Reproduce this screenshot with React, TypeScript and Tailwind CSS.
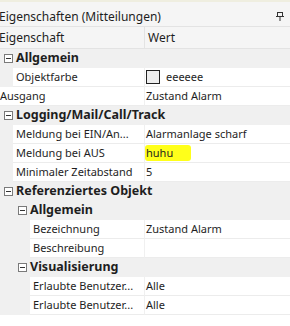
import React from "react";

type Row =
  | { kind: "cat"; level: number; label: string }
  | { kind: "prop"; level: number; label: string; value?: string; swatch?: boolean; mark?: boolean };

// property grid rows, in order
const ROWS: Row[] = [
  { kind: "cat", level: 0, label: "Allgemein" },
  { kind: "prop", level: 1, label: "Objektfarbe", value: "eeeeee", swatch: true },
  { kind: "prop", level: 0, label: "Ausgang", value: "Zustand Alarm" },
  { kind: "cat", level: 0, label: "Logging/Mail/Call/Track" },
  { kind: "prop", level: 1, label: "Meldung bei EIN/An...", value: "Alarmanlage scharf" },
  { kind: "prop", level: 1, label: "Meldung bei AUS", value: "huhu", mark: true },
  { kind: "prop", level: 1, label: "Minimaler Zeitabstand", value: "5" },
  { kind: "cat", level: 0, label: "Referenziertes Objekt" },
  { kind: "cat", level: 1, label: "Allgemein" },
  { kind: "prop", level: 2, label: "Bezeichnung", value: "Zustand Alarm" },
  { kind: "prop", level: 2, label: "Beschreibung", value: "" },
  { kind: "cat", level: 1, label: "Visualisierung" },
  { kind: "prop", level: 2, label: "Erlaubte Benutzer...", value: "Alle" },
  { kind: "prop", level: 2, label: "Erlaubte Benutzer...", value: "Alle" },
];

const FONT = { fontFamily: '"Noto Sans", "Open Sans", sans-serif' };

function Expander() {
  return (
    <span className="relative inline-block w-[9px] h-[9px] border border-[#7a7a7a] bg-white shrink-0">
      <span className="absolute left-[1px] right-[1px] top-[3px] h-px bg-[#333]" />
    </span>
  );
}

function CatRow({ level, label }: { level: number; label: string }) {
  return (
    <div className="flex items-center h-[19px] bg-[#f0f0f0]">
      <div className={level === 0 ? "w-[4px]" : "w-[18px]"} />
      <Expander />
      <span className="ml-[3px] font-bold text-[12.5px] text-[#1e1e1e] whitespace-nowrap">{label}</span>
    </div>
  );
}

function PropRow({ row }: { row: Extract<Row, { kind: "prop" }> }) {
  const gutter = row.level === 0 ? "w-0" : row.level === 1 ? "w-[13px]" : "w-[30px]";
  return (
    <div className="flex h-[19px] bg-[#f0f0f0]">
      <div className={gutter + " shrink-0"} />
      <div className="flex-1 flex items-center bg-white border-b border-[#ececec] border-r border-r-[#f0f0f0] overflow-hidden">
        <span className={(row.level === 0 ? "pl-0" : "pl-[3px]") + " text-[11px] text-[#1e1e1e] whitespace-nowrap"}>{row.label}</span>
      </div>
      <div className="w-[145px] shrink-0 flex items-center bg-white border-b border-[#ececec]">
        {row.swatch && <span className="ml-[1px] w-[14px] h-[14px] border border-[#222] bg-[#eeeeee] shrink-0" />}
        {row.mark ? (
          <span className="pl-[1px] pr-[18px] h-[16px] flex items-center bg-[#ffff1a] rounded-[3px] text-[11px] text-[#1e1e1e]">{row.value}</span>
        ) : (
          <span className={(row.swatch ? "ml-[6px]" : "ml-[1px]") + " text-[11px] text-[#1e1e1e] whitespace-nowrap"}>{row.value}</span>
        )}
      </div>
    </div>
  );
}

export default function App() {
  return (
    <div className="w-[290px] h-[326px] bg-white overflow-hidden" style={FONT}>
      <div className="h-[2px] bg-[#efeee0]" />
      <div className="h-[24px] bg-[#f5f5f5] flex items-center justify-between pr-[6px] pt-[5px]">
        <span className="-ml-[1px] text-[12px] text-[#1e1e1e] whitespace-nowrap">Eigenschaften (Mitteilungen)</span>
        <svg width="8" height="9" viewBox="0 0 8 9" className="shrink-0">
          <rect x="1.5" y="0.5" width="5" height="4" fill="none" stroke="#333" />
          <rect x="0" y="4" width="8" height="1" fill="#333" />
          <rect x="3.5" y="5" width="1" height="4" fill="#333" />
        </svg>
      </div>
      <div className="h-[23px] flex bg-[#f5f5f5] border-y border-[#e3e3e3]">
        <div className="w-[145px] flex items-center border-r border-[#e3e3e3]">
          <span className="-ml-[1px] text-[12px] text-[#1e1e1e]">Eigenschaft</span>
        </div>
        <div className="flex-1 flex items-center pl-[3px]">
          <span className="text-[12px] text-[#1e1e1e]">Wert</span>
        </div>
      </div>
      {ROWS.map((r, i) =>
        r.kind === "cat" ? <CatRow key={i} level={r.level} label={r.label} /> : <PropRow key={i} row={r} />
      )}
    </div>
  );
}
